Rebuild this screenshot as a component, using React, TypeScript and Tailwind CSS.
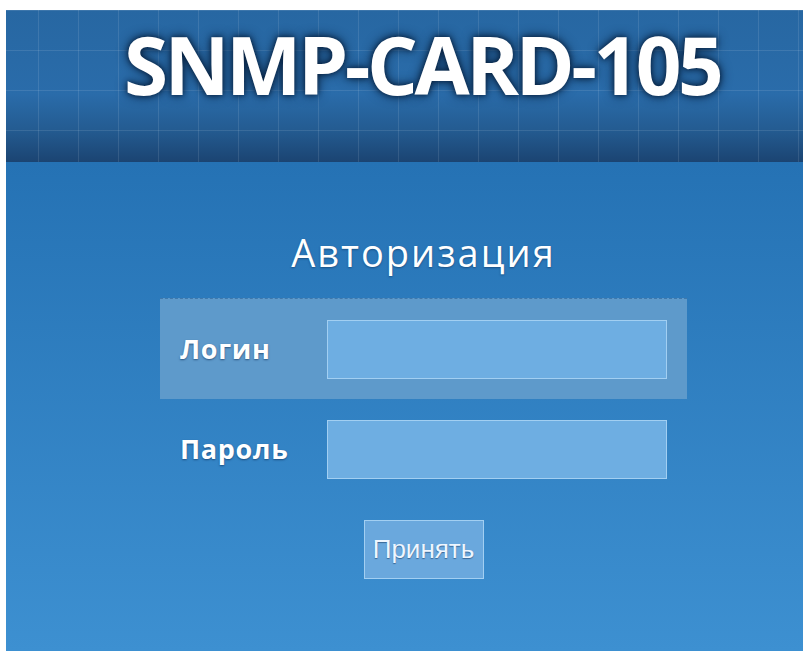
import { useState } from "react";

const font = { fontFamily: '"Open Sans", "DejaVu Sans", sans-serif' };

const Field = ({
  label,
  type,
  active,
}: {
  label: string;
  type: string;
  active?: boolean;
}) => {
  const [value, setValue] = useState("");
  return (
    <div
      className={`flex items-center h-[101px] pl-[20px] pr-[20px] ${
        active ? "bg-[#5e9acb] border-t border-dashed border-[#3f78ab]" : ""
      }`}
    >
      <label className="w-[147px] text-[27px] font-bold tracking-[0.7px] text-white [text-shadow:0_1px_2px_rgba(10,40,80,0.6)]">
        {label}
      </label>
      <input
        type={type}
        value={value}
        onChange={(e) => setValue(e.target.value)}
        className="w-[340px] h-[59px] bg-[#6eaee2] border border-[#a2cff2] outline-none px-2 text-white"
      />
    </div>
  );
};

export default function App() {
  return (
    <div className="min-h-[651px] bg-white pt-[10px] pl-[6px]" style={font}>
      <div className="h-[152px] flex items-start pt-[14px] pl-[118px] bg-[linear-gradient(to_right,rgba(255,255,255,0.1)_1px,transparent_1px),linear-gradient(to_bottom,rgba(255,255,255,0.1)_1px,transparent_1px),linear-gradient(to_bottom,#2767a2_0%,#2a6caa_55%,#245c92_78%,#1b4472_100%)] bg-[length:40px_40px,40px_40px,100%_100%] bg-[position:32px_0,0_0,0_0]">
        <h1 className="text-[80px] leading-[80px] font-bold text-white tracking-[-3.5px] [text-shadow:0_0_12px_#08213f,0_0_5px_#0a2748]">
          SNMP-CARD-105
        </h1>
      </div>
      <div className="h-[489px] bg-[linear-gradient(to_bottom,#2572b4,#3d90d1)]">
        <div className="ml-[154px] w-[527px] pt-[70px]">
          <h2 className="text-center text-[38px] leading-[40px] font-medium tracking-[2px] text-white [text-shadow:0_1px_2px_rgba(10,40,80,0.5)] mb-[26px]">
            Авторизация
          </h2>
          <Field label="Логин" type="text" active />
          <Field label="Пароль" type="password" />
          <div className="flex justify-center pt-[20px]">
            <button
              type="button"
              className="w-[120px] h-[59px] bg-[#6aa8dd] border border-[#a2cff2] text-[#eef6ff] text-[26px] [text-shadow:0_1px_1px_rgba(10,40,80,0.5)]"
              style={{ fontFamily: '"Liberation Sans", Arial, sans-serif' }}
            >
              Принять
            </button>
          </div>
        </div>
      </div>
    </div>
  );
}
